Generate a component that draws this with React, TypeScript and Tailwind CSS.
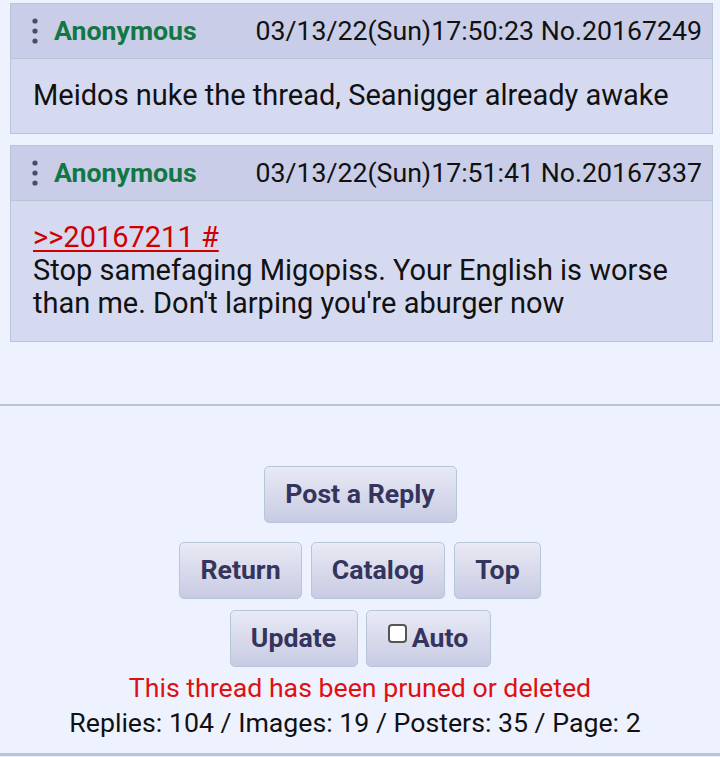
import React from "react";

const font = { fontFamily: "Roboto, 'Liberation Sans', sans-serif" };

function Dots() {
  return (
    <svg width="8" height="28" viewBox="0 0 8 28" className="shrink-0">
      <circle cx="4" cy="4" r="2.6" fill="#4b4b6b" />
      <circle cx="4" cy="14" r="2.6" fill="#4b4b6b" />
      <circle cx="4" cy="24" r="2.6" fill="#4b4b6b" />
    </svg>
  );
}

function Post({ date, no, children }: { date: string; no: string; children: React.ReactNode }) {
  return (
    <div className="ml-[10px] mr-[7px] border-[1.5px] border-[#b7c5d9] bg-[#d6daf0]">
      <div className="flex h-[55px] items-center bg-[#c9cde8] border-b-[1.5px] border-[#b7c5d9] pl-[20px] pr-[10px]">
        <Dots />
        <span className="ml-[15px] text-[26.7px] font-bold text-[#117743]">Anonymous</span>
        <span className="ml-auto text-[26.7px] text-[#111]">
          {date} No.{no}
        </span>
      </div>
      <div className="px-[22px] pt-[20px] pb-[21px] text-[29px] leading-[33px] text-[#111]">{children}</div>
    </div>
  );
}

function Btn({ children, className = "" }: { children: React.ReactNode; className?: string }) {
  return (
    <div
      className={
        "flex h-[57px] items-center justify-center rounded-[5px] border-[1.5px] border-[#b7c5d9] bg-gradient-to-b from-[#e9eaf5] to-[#c8cbe3] text-[26.7px] font-bold text-[#34345c] " +
        className
      }
    >
      {children}
    </div>
  );
}

export default function App() {
  return (
    <div style={font} className="h-[757px] w-[720px] overflow-hidden bg-[#eef2ff]">
      <div className="pt-[3px]">
        <Post date="03/13/22(Sun)17:50:23" no="20167249">
          Meidos nuke the thread, Seanigger already awake
        </Post>
        <div className="h-[11px]" />
        <Post date="03/13/22(Sun)17:51:41" no="20167337">
          <span className="text-[#d00000] underline decoration-[1.5px] underline-offset-[3px]">&gt;&gt;20167211 #</span>
          <br />
          Stop samefaging Migopiss. Your English is worse than me. Don't larping you're aburger now
        </Post>
      </div>
      <div className="mt-[62px] h-[2px] bg-[#b7c5d9]" />
      <div className="flex flex-col items-center pt-[60px]">
        <Btn className="w-[193px]">Post a Reply</Btn>
        <div className="mt-[19px] flex gap-[9px]">
          <Btn className="w-[123px]">Return</Btn>
          <Btn className="w-[134px]">Catalog</Btn>
          <Btn className="w-[87px]">Top</Btn>
        </div>
        <div className="mt-[11px] flex gap-[8px]">
          <Btn className="w-[128px]">Update</Btn>
          <Btn className="w-[125px]">
            <span className="mb-[10px] mr-[5px] inline-block h-[19px] w-[19px] rounded-[4px] border-[2px] border-[#555] bg-white" />
            Auto
          </Btn>
        </div>
        <div className="mt-[4px] text-[26.7px] leading-[34px] text-[#dd1111]">This thread has been pruned or deleted</div>
        <div className="mt-[1px] pr-[10px] text-[26.7px] leading-[34px] text-[#111]">Replies: 104 / Images: 19 / Posters: 35 / Page: 2</div>
      </div>
      <div className="mt-[13px] h-[3px] bg-[#b7c5d9]" />
    </div>
  );
}
